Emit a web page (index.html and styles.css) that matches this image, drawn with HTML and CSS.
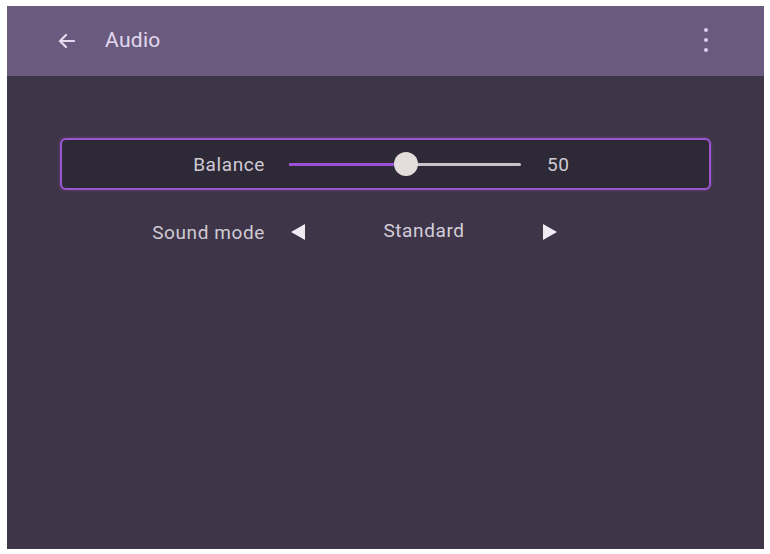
FILE: index.html
```html
<!DOCTYPE html>
<html lang="en">
<head>
<meta charset="utf-8">
<title>Audio</title>
<link rel="stylesheet" href="styles.css">
</head>
<body>
<div class="screen">
  <header class="appbar">
    <span class="back">
      <svg width="18" height="16" viewBox="0 0 18 16"><path d="M17 8H3M9 2L3 8l6 6" fill="none" stroke="#e6dcef" stroke-width="2.2" stroke-linecap="round" stroke-linejoin="round"/></svg>
    </span>
    <span class="title">Audio</span>
    <span class="more"><i></i><i></i><i></i></span>
  </header>
  <main class="content">
    <div class="row focused">
      <span class="label">Balance</span>
      <div class="slider">
        <div class="track"><div class="fill" style="width:50%"></div><div class="thumb" style="left:50%"></div></div>
      </div>
      <span class="value">50</span>
    </div>
    <div class="row">
      <span class="label">Sound mode</span>
      <div class="picker">
        <span class="tri left"></span>
        <span class="option">Standard</span>
        <span class="tri right"></span>
      </div>
    </div>
  </main>
</div>
</body>
</html>
```
FILE: styles.css
```css
html, body { margin: 0; padding: 0; background: #ffffff; }
body { font-family: Roboto, "Liberation Sans", sans-serif; }
.screen {
  margin: 6px 6px 0 7px;
  width: 757px;
  height: 543px;
  background: #3f3549;
  display: flex;
  flex-direction: column;
}
.appbar {
  height: 70px;
  background: #6a5b7e;
  display: flex;
  align-items: center;
  padding: 0 56px 0 50px;
  box-sizing: border-box;
}
.back { display: flex; width: 18px; height: 16px; margin-right: 30px; margin-top: -1px; }
.title { color: #e3d8ee; font-size: 21px; letter-spacing: 0.3px; flex: 1; margin-top: -2px; }
.more { display: flex; flex-direction: column; gap: 6px; margin-top: -2px; }
.more i { display: block; width: 4px; height: 4px; border-radius: 50%; background: #dccdec; }
.content { padding: 62px 53px 0; display: flex; flex-direction: column; gap: 0; }
.row {
  display: flex;
  align-items: center;
  height: 52px;
  box-sizing: border-box;
  border: 2px solid transparent;
  border-radius: 6px;
}
.row.focused {
  border-color: #9b55cf;
  background: #2e2936;
  box-shadow: 0 0 3px rgba(155, 85, 207, 0.5);
}
.row + .row { margin-top: 16px; }
.label {
  width: 203px;
  text-align: right;
  color: #d0cad4;
  font-size: 19px;
  letter-spacing: 0.6px;
}
.slider { margin-left: 24px; width: 232px; height: 24px; display: flex; align-items: center; }
.track { position: relative; width: 100%; height: 3px; background: #c9c3cb; border-radius: 2px; }
.fill { height: 100%; background: #9c50d4; border-radius: 2px; }
.thumb {
  position: absolute;
  top: 50%;
  width: 24px; height: 24px;
  margin: -12px 0 0 1px;
  border-radius: 50%;
  background: #e5dddc;
  transform: translateX(-50%);
}
.value { margin-left: 26px; color: #d0cad4; font-size: 19px; letter-spacing: 0.6px; }
.picker { margin-left: 26px; display: flex; align-items: center; }
.tri { width: 0; height: 0; border-top: 8px solid transparent; border-bottom: 8px solid transparent; }
.tri.left { border-right: 14px solid #f0ecf2; }
.tri.right { border-left: 14px solid #f0ecf2; }
.option { width: 238px; text-align: center; color: #d4ceda; font-size: 19px; letter-spacing: 0.6px; margin-top: -4px; }
```
